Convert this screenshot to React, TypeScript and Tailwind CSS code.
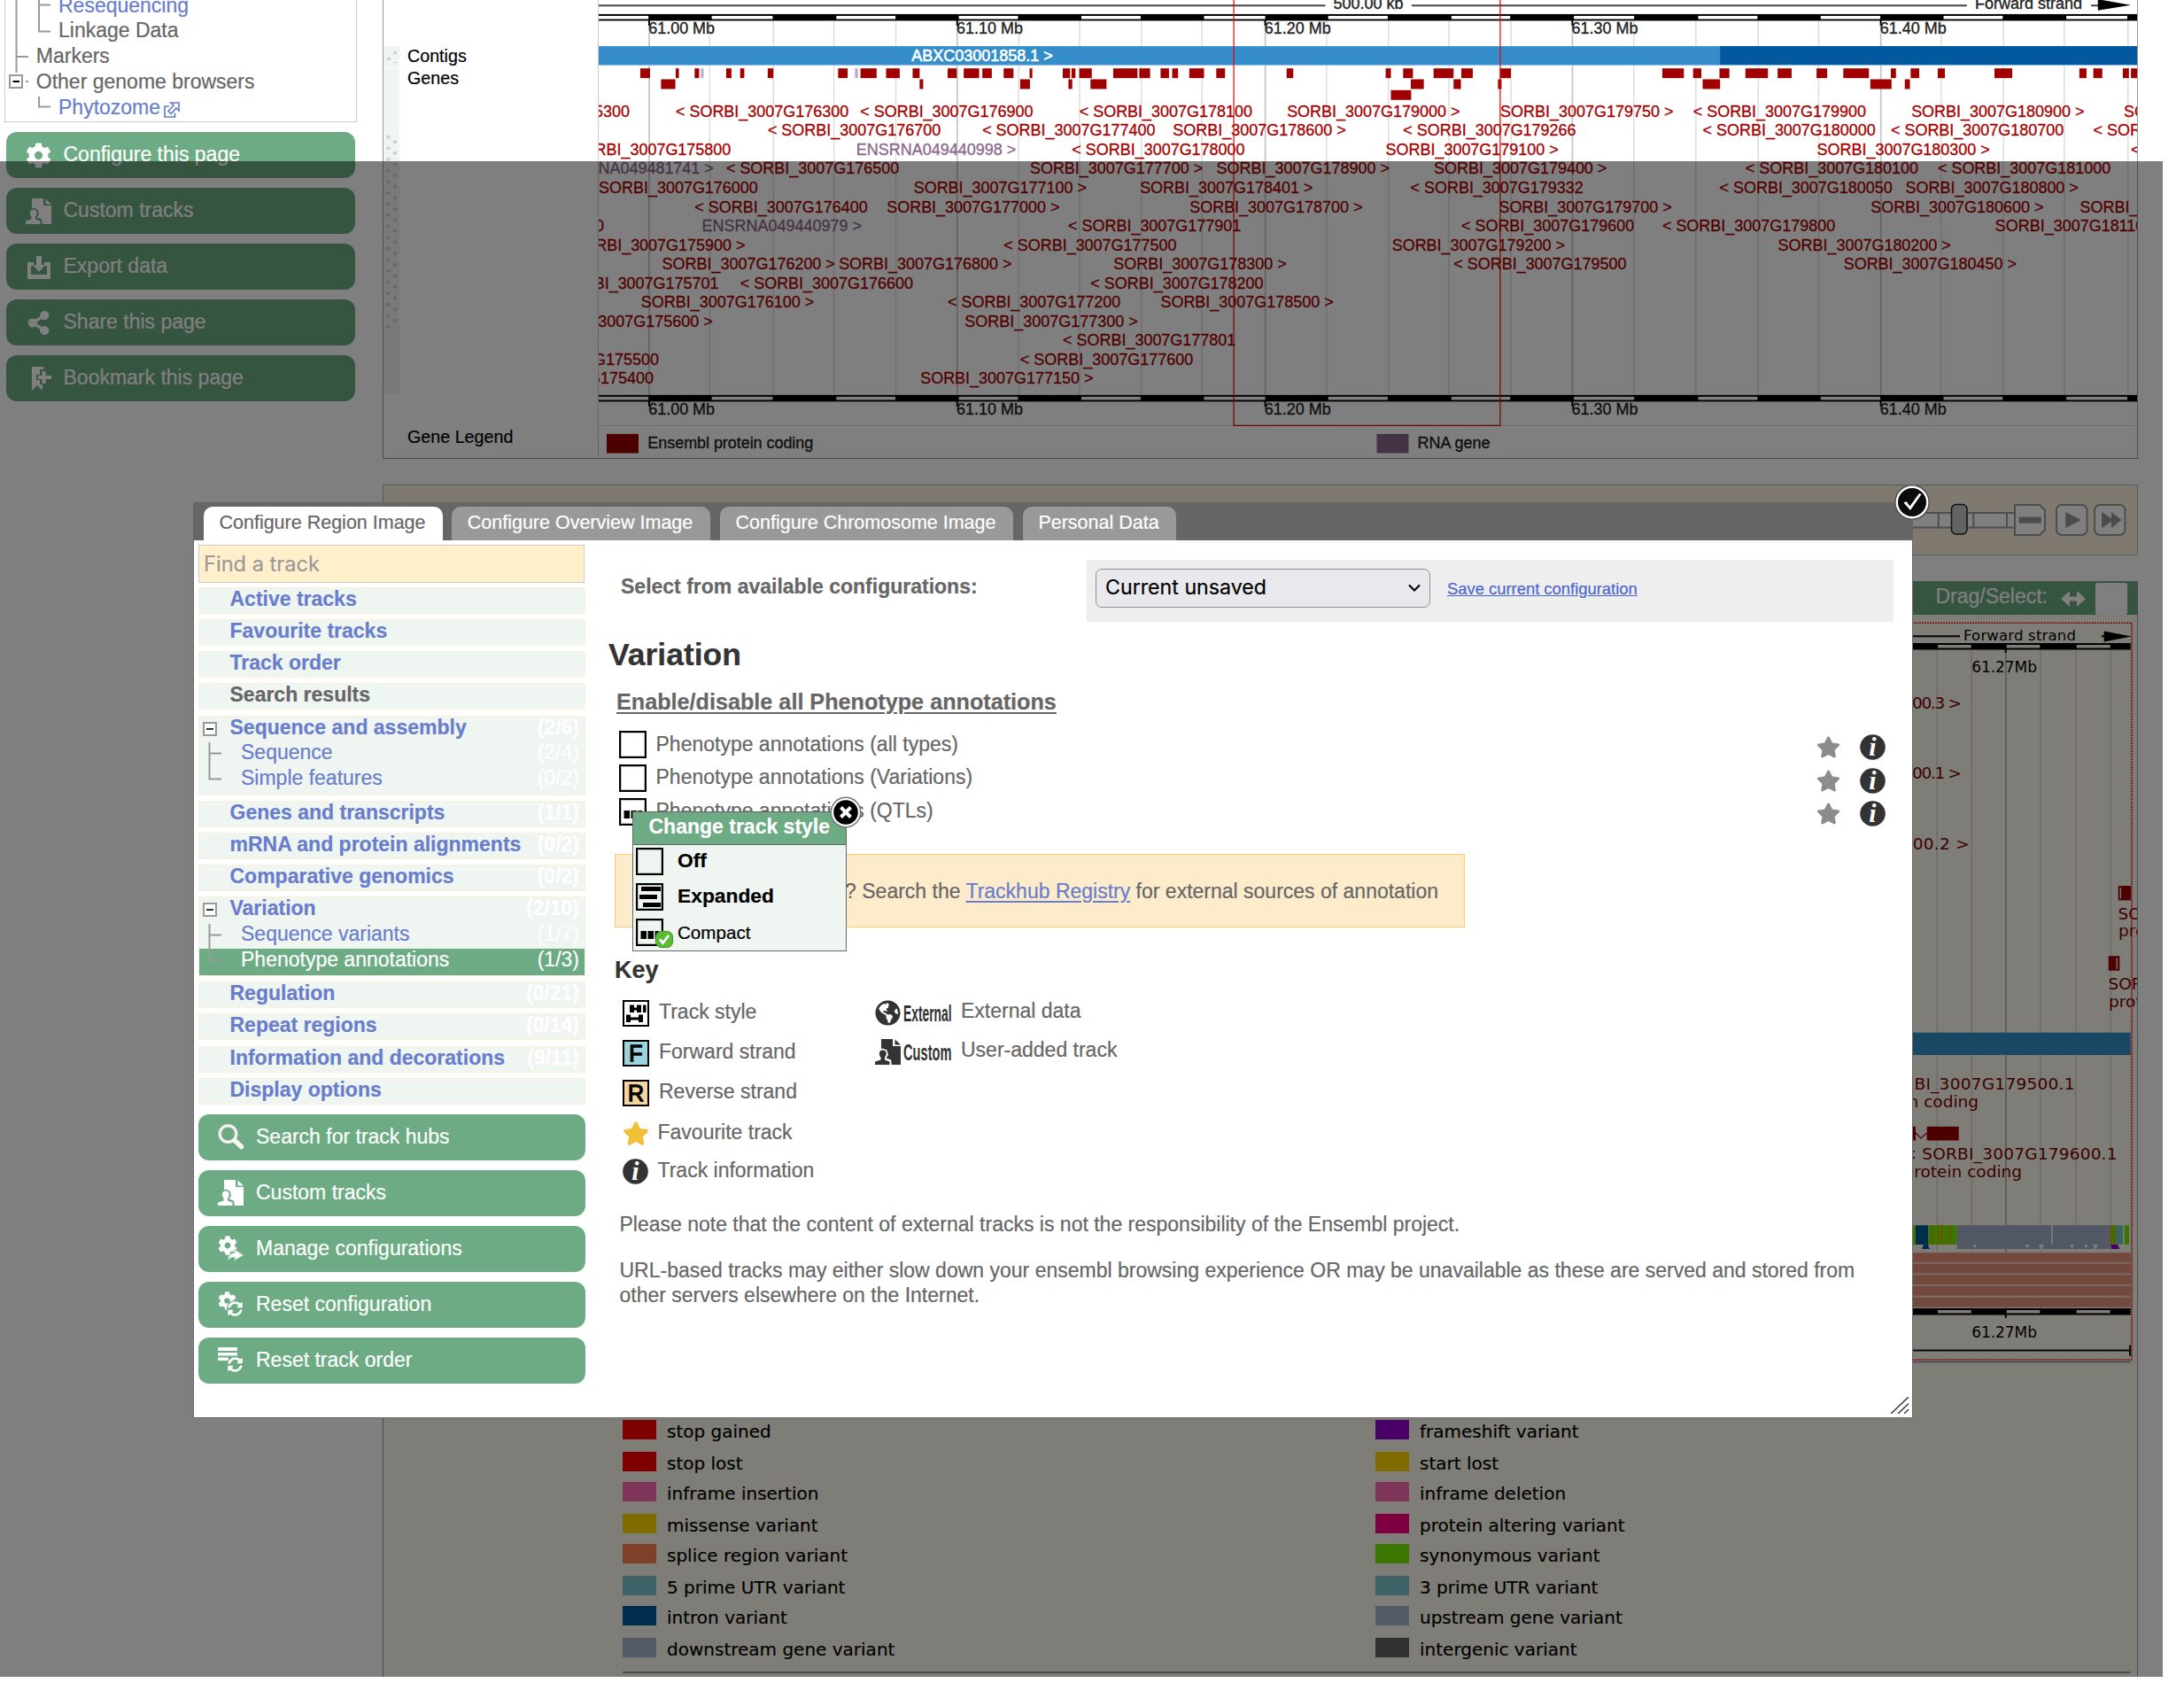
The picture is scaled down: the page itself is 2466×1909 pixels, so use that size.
import type { ReactNode } from "react";
import { FaCog, FaGlobeAmericas, FaShareAlt, FaStar, FaSyncAlt } from "react-icons/fa";

/* ---------- small icons ---------- */

const DocUser = ({ color = "#fff", gap = "#6cab83" }: { color?: string; gap?: string }) => (
  <svg viewBox="0 0 29 29" className="h-[29px] w-[29px] shrink-0">
    <path d="M7 0H20V8H29V29H7Z" fill={color} />
    <path d="M22.5 0.5L29 6.5H22.5Z" fill={color} />
    <path d="M-1 30V23.5L5 21.5L3.5 18.5V13L8.5 10.5L13.5 12.5L15 18L12.5 21.5L18 23.5L19 30Z" fill={gap} />
    <path d="M0 29V25.5L6.5 23.5V20.5Q4.8 19 4.8 16.5Q5 12.4 8.7 12.4Q12.6 12.4 12.8 16.5Q12.6 19 11 20.5V23.5L16.5 25.5V29Z" fill={color} />
  </svg>
);

const ExportIcon = () => (
  <svg viewBox="0 0 29 29" className="h-[29px] w-[29px] shrink-0" fill="#fff">
    <path d="M2 9H9V13H6V23H24V13H21V9H28V28H2Z" />
    <path d="M12 2H18V12H22L15 20L8 12H12Z" />
  </svg>
);

const BookmarkIcon = () => (
  <svg viewBox="0 0 29 29" className="h-[29px] w-[29px] shrink-0" fill="#fff">
    <path d="M7 1H20V4H16V10H12V16H16V21H19V28L13 22L7 28Z" />
    <path d="M18.5 6H22.5V11H29V15H22.5V20H18.5V15H14V11H18.5Z" />
  </svg>
);

const Magnifier = () => (
  <svg viewBox="0 0 29 29" className="h-[29px] w-[29px] shrink-0" fill="none">
    <circle cx="11.5" cy="11" r="9.3" stroke="#c9c9c9" strokeWidth="4" />
    <circle cx="11.5" cy="11" r="9.3" stroke="#f6f6f6" strokeWidth="2.4" />
    <path d="M19 18.5L26.5 25.5" stroke="#f6f6f6" strokeWidth="5.5" strokeLinecap="round" />
  </svg>
);

const ManageIcon = () => (
  <span className="relative h-[29px] w-[29px] shrink-0 text-white">
    <FaCog className="absolute left-0 top-0 h-[22px] w-[22px]" />
    <svg viewBox="0 0 29 29" className="absolute inset-0">
      <path d="M11 28Q11.5 20 19 19V15.5L29 22L19 28V24.5Q14 24 11 28Z" fill="#fff" stroke="#8fbfa0" strokeWidth="1" />
    </svg>
  </span>
);

const ResetConfigIcon = () => (
  <span className="relative h-[29px] w-[29px] shrink-0 text-white">
    <FaCog className="absolute left-0 top-0 h-[21px] w-[21px]" />
    <span className="absolute bottom-0 right-0 h-[19px] w-[19px] rounded-full bg-[#6cab83] p-[1px]">
      <FaSyncAlt className="h-[17px] w-[17px]" />
    </span>
  </span>
);

const ResetOrderIcon = () => (
  <span className="relative h-[29px] w-[29px] shrink-0 text-white">
    <svg viewBox="0 0 29 29" className="absolute inset-0" fill="#fff">
      <path d="M0 0H22V4H0ZM0 6H22V9.500H0ZM0 11.500H12V15H0Z" />
    </svg>
    <span className="absolute bottom-0 right-0 h-[19px] w-[19px] rounded-full bg-[#6cab83] p-[1px]">
      <FaSyncAlt className="h-[17px] w-[17px]" />
    </span>
  </span>
);

const InfoIcon = () => (
  <svg viewBox="0 0 29 29" className="h-[29px] w-[29px] shrink-0">
    <circle cx="14.500" cy="14.500" r="14.300" fill="#333" />
    <text x="14.500" y="24" textAnchor="middle" fontFamily="Liberation Serif, serif" fontStyle="italic" fontWeight="700" fontSize="30" fill="#fff">i</text>
  </svg>
);

const Expander = () => (
  <svg viewBox="0 0 16 16" className="h-4 w-4 shrink-0">
    <rect x="1" y="1" width="14" height="14" fill="#fff" stroke="#999" strokeWidth="2" />
    <path d="M4 8H12" stroke="#000" strokeWidth="1.600" />
  </svg>
);

type BoxKind = "off" | "expanded" | "compact";
const TrackBox = ({ kind, fill = "#fff" }: { kind: BoxKind; fill?: string }) => (
  <svg viewBox="0 0 31 31" className="h-[31px] w-[31px] shrink-0">
    <rect x="1" y="1" width="29" height="29" fill={fill} stroke="#000" strokeWidth="2" />
    <rect x="2.500" y="2.500" width="26" height="26" fill="none" stroke="#999" strokeWidth="1" opacity=".6" />
    {kind === "expanded" && <path d="M6 4H28V9H6ZM4 13H24V18H4ZM8 22H28V27H8Z" />}
    {kind === "compact" && <path d="M5.500 14H12V23H5.500ZM13.500 14H20V23H13.500ZM21.500 14H26V23H21.500Z" />}
  </svg>
);

/* ---------- overview chart ---------- */

const whiteSegs: [number, number][] = [
  [675, 731.2], [802.7, 871.5], [943.5, 1010.3], [1081.9, 1148.7], [1220.3, 1287.3], [1358.9, 1428], [1499.2, 1566.4],
  [1638.4, 1704.8], [1776.8, 1844.8], [1917.2, 1984.1], [2055.6, 2122.9], [2194.4, 2261.2], [2333.1, 2401.9],
];
const minorGrid = [800.4, 872.3, 940.7, 1010.7, 1149.5, 1218.3, 1288, 1356.5, 1497.2, 1567.2, 1635.6, 1705.6, 1844.4, 1914.5, 1984.9, 2053.3, 2191.7, 2262, 2330.8, 2402.7];
const majorGrid: [number, string][] = [[732, "61.00 Mb"], [1080, "61.10 Mb"], [1428, "61.20 Mb"], [1775, "61.30 Mb"], [2123.5, "61.40 Mb"]];

const genes: [number, number, number][] = [
  ...([[722, 733], [762, 765.6], [783.4, 788.5], [819, 825], [834.8, 839.5], [866, 872.3], [945.5, 956.2], [970.8, 989], [999.7, 1015.1], [1029.7, 1037.6], [1069.2, 1079.5], [1087.4, 1104.8], [1108.4, 1119.1], [1132.5, 1143.6], [1161.8, 1164.9], [1199.3, 1207.6], [1209.2, 1213.6], [1217.9, 1232.1], [1256.3, 1283.7], [1285.7, 1298], [1309.8, 1319.3], [1322.9, 1329.6], [1342.2, 1358.9], [1372.7, 1382.6], [1452.2, 1459.7], [1564.1, 1570], [1583.8, 1594.9], [1618.2, 1640.8], [1649.5, 1662.5], [1693.4, 1705.6], [1876.6, 1901], [1911.4, 1920.7], [1941.2, 1952.4], [1970.5, 1996], [2006.9, 2022.7], [2050.9, 2062.9], [2081.1, 2110.1], [2134.8, 2140.6], [2157.2, 2166.9], [2187.8, 2195.9], [2251.9, 2272], [2347.8, 2355.9], [2363.6, 2373.7], [2396.9, 2403.8], [2406.1, 2413]] as [number, number][]).map(([a, b]): [number, number, number] => [0, a, b]),
  ...([[745.4, 761.6], [1037.6, 1041.6], [1151.1, 1162.2], [1205.7, 1210], [1230.6, 1248.7], [1592.5, 1607.2], [1640.8, 1649.1], [1691, 1695], [1922.2, 1941.9], [2111.6, 2135.6], [2150.6, 2156.4]] as [number, number][]).map(([a, b]): [number, number, number] => [1, a, b]),
  [2, 1570, 1592.9],
];

const S = "SORBI_3007G";
const labelRows: [number, string][][] = [
  [[530.2, S + "175300"], [762, "< " + S + "176300"], [970.4, "< " + S + "176900"], [1218, "< " + S + "178100"], [1452.6, S + "179000 >"], [1693.7, S + "179750 >"], [1911.4, "< " + S + "179900"], [2158, S + "180900 >"], [2398, S + "181200"]],
  [[866, "< " + S + "176700"], [1108.4, "< " + S + "177400"], [1323.7, S + "178600 >"], [1583.8, "< " + S + "179266"], [1922.2, "< " + S + "180000"], [2134.8, "< " + S + "180700"], [2363.6, "< " + S + "181300"]],
  [[644.5, S + "175800"], [966, "ENSRNA049440998 >"], [1209.6, "< " + S + "178000"], [1564, S + "179100 >"], [2051.3, S + "180300 >"], [2406, "< " + S + "181400"]],
  [[624.5, "ENSRNA049481741 >"], [819, "< " + S + "176500"], [1162.2, S + "177700 >"], [1373, S + "178900 >"], [1618.6, S + "179400 >"], [1970.5, "< " + S + "180100"], [2187.8, "< " + S + "181000"]],
  [[675, S + "176000"], [1030.9, S + "177100 >"], [1286.5, S + "178401 >"], [1592, "< " + S + "179332"], [1941.2, "< " + S + "180050"], [2151.4, S + "180800 >"]],
  [[783.4, "< " + S + "176400"], [1000.4, S + "177000 >"], [1342.6, S + "178700 >"], [1692, S + "179700 >"], [2112, S + "180600 >"], [2348.5, S + "181150"]],
  [[501, S + "175700"], [791.7, "ENSRNA049440979 >"], [1205.3, "< " + S + "177901"], [1649.5, "< " + S + "179600"], [1876.6, "< " + S + "179800"], [2252.7, S + "181100"]],
  [[645.2, S + "175900 >"], [1132.5, "< " + S + "177500"], [1571.2, S + "179200 >"], [2007.3, S + "180200 >"]],
  [[746.6, S + "176200 >"], [946.3, S + "176800 >"], [1256.7, S + "178300 >"], [1640.8, "< " + S + "179500"], [2081.5, S + "180450 >"]],
  [[630.7, S + "175701"], [834.8, "< " + S + "176600"], [1230.6, "< " + S + "178200"]],
  [[722.9, S + "176100 >"], [1069.2, "< " + S + "177200"], [1309.8, S + "178500 >"]],
  [[608.4, S + "175600 >"], [1088.6, S + "177300 >"]],
  [[1199.3, "< " + S + "177801"]],
  [[563, S + "175500"], [1151.1, "< " + S + "177600"]],
  [[557.1, S + "175400"], [1038.4, S + "177150 >"]],
];

const ScaleBar = ({ y, label }: { y: number; label: number }) => (
  <g>
    <rect x="675" y={y} width="1738" height="7.500" fill="#000" />
    {whiteSegs.map(([a, b]) => <rect key={a} x={a} y={y + 2} width={b - a} height="3.600" fill="#fff" />)}
    {majorGrid.map(([x, t]) => (
      <g key={x}>
        <rect x={x - 1} y={y + 7} width="2" height="6" fill="#000" />
        <text x={x - 0.8} y={label} fill="#222" stroke="#222" strokeWidth=".35">{t}</text>
      </g>
    ))}
  </g>
);

const OverviewChart = () => (
  <svg viewBox="675 0 1738 517" className="h-[517px] w-[1738px] shrink-0 border-l border-[#ccc]" fontFamily="Liberation Sans, Arial, sans-serif" fontSize="18">
    {minorGrid.map((x) => <rect key={x} x={x - 0.7} y="23" width="1.500" height="423" fill="#dedede" />)}
    {majorGrid.map(([x]) => <rect key={x} x={x - 0.8} y="23" width="1.700" height="423" fill="#c4c4c4" />)}
    <path d="M675 6H1496M1593.500 6H2220.700M2361 6H2370" stroke="#444" strokeWidth="2" />
    <path d="M2368.700 -1L2406 5.500L2368.700 11.500Z" />
    <text x="1505" y="9.800" fill="#222" stroke="#222" strokeWidth=".35">500.00 kb</text>
    <text x="2230" y="9.800" fill="#222" stroke="#222" strokeWidth=".35" textLength="121">Forward strand</text>
    <ScaleBar y={15.8} label={37.6} />
    <ScaleBar y={446} label={467.8} />
    <rect x="675" y="52" width="1738" height="21.700" fill="#358ec9" />
    <rect x="1942" y="52" width="471" height="21.700" fill="#00599d" />
    <rect x="675" y="72.800" width="1738" height="1" fill="#8fc0e2" />
    <text x="1028.500" y="68.500" fill="#fff" stroke="#fff" strokeWidth=".6">ABXC03001858.1 &gt;</text>
    {genes.map(([r, a, b]) => <rect key={r + "-" + a} x={a} y={77.1 + r * 12.3} width={b - a} height="11" fill="#a00000" />)}
    <rect x="790.500" y="77.100" width="3" height="11" fill="#c1a9c6" />
    <rect x="964.500" y="77.100" width="3.300" height="11" fill="#c1a9c6" />
    <g strokeWidth=".3">
      {labelRows.map((row, i) =>
        row.map(([x, t]) => {
          const color = t.startsWith("ENS") ? "#8b668b" : "#a50000";
          return <text key={x} x={x} y={131.8 + i * 21.55} fill={color} stroke={color}>{t}</text>;
        })
      )}
    </g>
    <rect x="675" y="480" width="1738" height="1" fill="#ddd" />
    <path d="M1392.500 -2V480.500H1693.500V-2" fill="none" stroke="#e80000" strokeWidth="1.200" />
    <rect x="684" y="490" width="36" height="21.700" fill="#9a0000" />
    <g fill="#222" stroke="#222" strokeWidth=".35">
      <text x="730.400" y="506.200" textLength="187">Ensembl protein coding</text>
      <text x="1600" y="506.200" textLength="82">RNA gene</text>
    </g>
    <rect x="1554" y="490" width="36" height="21.700" fill="#8b668b" />
  </svg>
);

/* ---------- detail chart ---------- */

const RegionBar = ({ y, label }: { y: number; label: number }) => (
  <g>
    <rect x="433" y={y} width="1972.700" height="7.500" />
    {[[2188, 2225.7], [2265.7, 2303.3], [2344.7, 2382.7]].map(([a, b]) => <rect key={a} x={a} y={y + 2} width={b - a} height="3.500" fill="#fffaef" />)}
    <rect x="2263.700" y={y + 7} width="2" height="4" />
    <text x="2226.300" y={label} fontSize="17" textLength="73.700">61.27Mb</text>
  </g>
);

const DetailChart = () => (
  <svg viewBox="433 694 1980 894" className="h-[894px] w-[1980px] shrink-0" fontFamily="DejaVu Sans, sans-serif" fontSize="18.500">
    {[2187.3, 2226.3, 2304, 2343.7, 2383.3].map((x) => <rect key={x} x={x - 0.8} y="733" width="1.600" height="744" fill="#dcdad8" />)}
    <rect x="2264" y="733" width="1.700" height="744" fill="#b4b2b0" />
    <path d="M433 718.200H2213M2373 718.200H2380" stroke="#000" strokeWidth="2" />
    <path d="M2375.700 712.500L2406.700 718.500L2375.700 724.600Z" />
    <text x="2217" y="722.500" fontSize="16.500" textLength="127">Forward strand</text>
    <RegionBar y={726} label={758.6} />
    <RegionBar y={1477} label={1509.6} />
    <g fill="#7a0000">
      <text x="2215" y="800" textAnchor="end" textLength="56">00.3 &gt;</text>
      <text x="2215" y="879" textAnchor="end" textLength="56">00.1 &gt;</text>
      <text x="2223.700" y="958.600" textAnchor="end" textLength="64">00.2 &gt;</text>
      <text x="2391.500" y="1037.500">SORBI_3007G</text>
      <text x="2392" y="1056.800">protein coding</text>
      <text x="2380.500" y="1116.800">SORBI_3007G</text>
      <text x="2381" y="1136.800">protein coding</text>
      <text x="2342.500" y="1230" textAnchor="end" textLength="221">SORBI_3007G179500.1</text>
      <text x="2234" y="1249.600" textAnchor="end">protein coding</text>
      <text x="2390.500" y="1309.300" textAnchor="end" textLength="242">&lt; SORBI_3007G179600.1</text>
      <text x="2283" y="1329.300" textAnchor="end">protein coding</text>
    </g>
    <g fill="#9a0000">
      <rect x="2391.700" y="1000" width="14.300" height="16.400" />
      <rect x="2380.700" y="1079.300" width="12.600" height="16.400" />
      <rect x="2150" y="1271.800" width="13" height="15.700" />
      <rect x="2175.700" y="1271.800" width="36" height="15.700" />
    </g>
    <path d="M2163 1279L2169 1285L2175.700 1279" fill="none" stroke="#9a0000" strokeWidth="1.200" />
    <rect x="2393.500" y="1002" width="1.600" height="12.500" fill="#e8d8d0" />
    <rect x="2389.500" y="1081.500" width="1.600" height="12.500" fill="#e8d8d0" />
    <rect x="433" y="1165.700" width="1972.700" height="25.300" fill="#358ec9" />
    <g>
      <rect x="2150" y="1383.200" width="13" height="22" fill="#76ee00" />
      <path d="M2163 1383.200H2177.300V1407L2179 1410H2170L2172 1405H2163Z" fill="#00599d" />
      <rect x="2177.300" y="1383.200" width="32.400" height="21.800" fill="#76ee00" />
      <path d="M2182 1383.200V1405M2188.700 1383.200V1405M2192.500 1383.200V1405M2201.700 1383.200V1405" stroke="#e0a000" strokeWidth="1.600" />
      <rect x="2209.700" y="1383.200" width="173" height="26.800" fill="#a2aec8" />
      <rect x="2316" y="1383.200" width="1.700" height="21.800" fill="#fffaef" />
      <path d="M2228 1405H2231V1408H2228ZM2287 1405H2291V1408H2287ZM2338 1405H2341V1408H2338ZM2354 1405H2357V1408H2354ZM2302 1405H2308L2305.500 1410H2304ZM2363 1405H2369L2367 1410H2365Z" fill="#fffaef" />
      <rect x="2382.700" y="1383.200" width="6.300" height="21.800" fill="#76ee00" />
      <path d="M2383.500 1383.200V1405M2387 1383.200V1405" stroke="#e0a000" strokeWidth="1.400" />
      <rect x="2389" y="1383.200" width="8" height="21.800" fill="#7ac5cd" />
      <rect x="2398.700" y="1383.200" width="5.300" height="21.800" fill="#76ee00" />
      <path d="M2383 1405H2391L2393.500 1410H2384Z" fill="#9400d3" />
    </g>
    <rect x="433" y="1414.300" width="1972.700" height="61.500" fill="#f2cfc0" />
    {[1414.3, 1426.8, 1439.4, 1452, 1465].map((y) => <rect key={y} x="433" y={y} width="1972.700" height="10.500" fill="#e8927a" />)}
    <path d="M433 1524.600H2405M2405 1518.500V1530.700" stroke="#111" strokeWidth="2" />
    <path d="M433 1537.500H2406" stroke="#888" strokeWidth="1.500" />
    <path d="M433 703.300H2407V1535H433" fill="none" stroke="#f01818" strokeWidth="1.600" strokeDasharray="2 1" />
  </svg>
);

const legend: [string, string, string, string][] = [
  ["#ff0000", "stop gained", "#9400d3", "frameshift variant"],
  ["#ff0000", "stop lost", "#ffd700", "start lost"],
  ["#ff69b4", "inframe insertion", "#ff69b4", "inframe deletion"],
  ["#ffd700", "missense variant", "#ff0080", "protein altering variant"],
  ["#ff7f50", "splice region variant", "#76ee00", "synonymous variant"],
  ["#7ac5cd", "5 prime UTR variant", "#7ac5cd", "3 prime UTR variant"],
  ["#00599d", "intron variant", "#a2b5cd", "upstream gene variant"],
  ["#a2b5cd", "downstream gene variant", "#636363", "intergenic variant"],
];

const LegendCell = ({ color, label }: { color: string; label: string }) => (
  <div className="flex items-start gap-[12px]">
    <span className="h-[22px] w-[38px] shrink-0" style={{ backgroundColor: color }} />
    <span className="whitespace-nowrap font-['DejaVu_Sans'] text-[20px] leading-[27px] text-black">{label}</span>
  </div>
);

/* ---------- left navigation ---------- */

const TreeRow = ({ lines, label, link, icon, indent }: { lines: ReactNode; label: string; link?: boolean; icon?: ReactNode; indent: boolean }) => (
  <div className="flex h-[28.8px] items-center">
    <svg viewBox={indent ? "0 0 60 28.8" : "0 0 34.8 28.8"} className={indent ? "h-[28.8px] w-[60px] shrink-0" : "h-[28.8px] w-[34.8px] shrink-0"} stroke="#999" strokeWidth="2" fill="none">
      {lines}
    </svg>
    <span className={link ? "whitespace-nowrap pb-px text-[#687dcc]" : "whitespace-nowrap pb-px text-[#666]"}>{label}</span>
    {icon}
  </div>
);

const SideButton = ({ icon, label, inset }: { icon: ReactNode; label: string; inset?: boolean }) => (
  <div className={`flex h-[52px] items-center rounded-xl bg-[#6cab83] text-[23px] text-white ${inset ? "gap-[14px] pl-[22px]" : "gap-[13.500px] pl-[22px]"}`}>
    {icon}
    <span className="whitespace-nowrap pb-[2px] leading-[30px]">{label}</span>
  </div>
);

const ToolControls = () => (
  <svg viewBox="2140 560 262 54" className="h-[54px] w-[262px]" stroke="#9c9c9c" strokeWidth="2">
    <rect x="2100" y="579" width="180" height="16.500" fill="#fff" />
    <path d="M2188.700 579V595.500M2228.300 579V595.500M2266 579V595.500" />
    <rect x="2203.500" y="569.500" width="17.500" height="33.500" rx="5" fill="#c6c6c6" stroke="#222" strokeWidth="1.500" />
    <path d="M2275 570H2303L2309 576V598L2303 604H2275Z" fill="#fff" />
    <rect x="2279.700" y="583.600" width="25" height="7" fill="#999" stroke="none" />
    {[2322, 2365].map((x) => (
      <rect key={x} x={x} y="570" width="34.500" height="34" rx="6" fill="#fff" />
    ))}
    <path d="M2332.300 578L2349.700 587L2332.300 596ZM2373 578L2384 585V578L2395.500 587L2384 596V589L2373 596Z" fill="#999" stroke="none" />
  </svg>
);

/* ---------- modal ---------- */

type Item = { label: string; count?: string; plain?: boolean; children?: { label: string; count: string; active?: boolean }[] };
const menu: Item[] = [
  { label: "Active tracks" },
  { label: "Favourite tracks" },
  { label: "Track order" },
  { label: "Search results", plain: true },
  { label: "Sequence and assembly", count: "(2/6)", children: [{ label: "Sequence", count: "(2/4)" }, { label: "Simple features", count: "(0/2)" }] },
  { label: "Genes and transcripts", count: "(1/1)" },
  { label: "mRNA and protein alignments", count: "(0/2)" },
  { label: "Comparative genomics", count: "(0/2)" },
  { label: "Variation", count: "(2/10)", children: [{ label: "Sequence variants", count: "(1/7)" }, { label: "Phenotype annotations", count: "(1/3)", active: true }] },
  { label: "Regulation", count: "(0/21)" },
  { label: "Repeat regions", count: "(0/14)" },
  { label: "Information and decorations", count: "(9/11)" },
  { label: "Display options" },
];

const MenuItem = ({ item }: { item: Item }) => (
  <div className={`border border-[#fbf1da] bg-[#eff5f1] ${item.children ? "h-[90px]" : "h-[30px]"}`}>
    <div className={`flex h-[28.5px] items-start pr-[6px] font-bold ${item.children ? "leading-[24px]" : "leading-[25px]"} ${item.plain ? "text-[#666]" : "text-[#687dcc]"}`}>
      <span className="w-[34.500px] shrink-0 pl-1 pt-[6px]">{item.children && <Expander />}</span>
      <span className="flex-1 whitespace-nowrap">{item.label}</span>
      <span className="text-white">{item.count}</span>
    </div>
    {item.children?.map((c, i) => (
      <div key={c.label} className={`flex items-start pr-[6px] leading-[24px] ${c.active ? "h-[30.5px] bg-[#6cab83] text-white" : "h-[29px] text-[#687dcc]"}`}>
        <svg viewBox="0 0 47 29" className="h-[29px] w-[47px] shrink-0" fill="none" stroke="#999" strokeWidth="2">
          <path d={i === 0 ? "M11.500 1V29M11.500 13.500H25" : "M11.500 0V13.500H25"} />
        </svg>
        <span className="flex-1 whitespace-nowrap">{c.label}</span>
        <span className="text-white">{c.count}</span>
      </div>
    ))}
  </div>
);

const TrackRow = ({ kind, label }: { kind: BoxKind; label: string }) => (
  <div className="flex h-[37.8px] items-center pl-[38px] pr-[9px]">
    <TrackBox kind={kind} />
    <span className="flex-1 whitespace-nowrap pb-[2px] pl-[10.500px]">{label}</span>
    <FaStar className="mr-[22px] mt-[5px] h-[27px] w-[27px] text-[#8c8c8c]" />
    <span className="mt-[5px]"><InfoIcon /></span>
  </div>
);

const LetterBox = ({ letter, fill }: { letter: string; fill: string }) => (
  <svg viewBox="0 0 30 30" className="h-[30px] w-[30px] shrink-0">
    <rect x="1" y="1" width="28" height="28" fill={fill} stroke="#000" strokeWidth="2" />
    <text x="15" y="24" textAnchor="middle" fontFamily="Liberation Sans, sans-serif" fontSize="25" fill="#000" stroke="#000" strokeWidth="1.300">{letter}</text>
  </svg>
);

const KeyRow = ({ icon, label, near }: { icon: ReactNode; label: string; near?: boolean }) => (
  <div className="flex h-[45.3px] items-start">
    <span className={near ? "w-[39.500px] shrink-0" : "w-[41px] shrink-0"}>{icon}</span>
    <span className="whitespace-nowrap leading-[27px]">{label}</span>
  </div>
);

const TagLabel = ({ text }: { text: string }) => (
  <svg viewBox="0 0 55 30" className="h-[30px] w-[55px] shrink-0">
    <text x="0" y="24" fontFamily="Liberation Sans, sans-serif" fontWeight="700" fontSize="26" fill="#333" textLength="54.500" lengthAdjust="spacingAndGlyphs">{text}</text>
  </svg>
);

const StylePopup = () => (
  <div className="absolute left-[714px] top-[916px] h-[158px] w-[242px] border border-[#666] bg-[#eff5f1] text-black">
    <div className="h-[37px] border-b border-[#666] bg-[#6cab83] pl-[17.500px] text-[23px] font-bold leading-[32px] text-white">Change track style</div>
    {([["off", "Off"], ["expanded", "Expanded"], ["compact", "Compact"]] as [BoxKind, string][]).map(([kind, label]) => (
      <div key={kind} className="flex h-[40px] items-start pl-[3px] pt-[3px]">
        <span className="relative">
          <TrackBox kind={kind} fill="#eff5f1" />
          {kind === "compact" && (
            <svg viewBox="0 0 20 19" className="absolute left-[22px] top-[14px] h-[19px] w-[20px]">
              <rect x=".5" y=".5" width="19" height="18" rx="6" fill="#5cba35" stroke="#3f9420" />
              <path d="M5 9.500L8.500 13.500L15 5" stroke="#fff" strokeWidth="2.800" fill="none" />
            </svg>
          )}
        </span>
        <span className={`pl-[16px] ${kind === "compact" ? "text-[20.6px] leading-[31px]" : "text-[22.800px] font-bold leading-[28px]"}`}>{label}</span>
      </div>
    ))}
    <svg viewBox="0 0 36 36" className="absolute right-[-18px] top-[-18px] h-[36px] w-[36px]">
      <circle cx="18" cy="18" r="17.500" fill="#777" />
      <circle cx="18" cy="18" r="16" fill="#fff" />
      <circle cx="18" cy="18" r="13.800" fill="#000" />
      <path d="M12.500 12.500L23.500 23.500M23.500 12.500L12.500 23.500" stroke="#fff" strokeWidth="4" />
    </svg>
  </div>
);

const Modal = () => (
  <div className="absolute left-[218px] top-[567px] flex h-[1034px] w-[1942px] flex-col border border-[#666] bg-white text-[23px] text-[#666]">
    <div className="flex h-[42px] shrink-0 items-end gap-[11px] bg-[#666] pl-[11px] text-[21.5px] leading-[37px]">
      <div className="h-[38px] w-[270px] whitespace-nowrap rounded-t-[10px] bg-white pr-[2px] text-center">Configure Region Image</div>
      <div className="h-[38px] w-[292px] whitespace-nowrap rounded-t-[10px] bg-[#999] pr-[2px] text-center text-white -ml-px">Configure Overview Image</div>
      <div className="h-[38px] w-[331px] whitespace-nowrap rounded-t-[10px] bg-[#999] pr-[2px] text-center text-white">Configure Chromosome Image</div>
      <div className="h-[38px] w-[173px] whitespace-nowrap rounded-t-[10px] bg-[#999] pr-[2px] text-center text-white">Personal Data</div>
    </div>
    <div className="flex flex-1">
      <aside className="w-[442px] shrink-0 pl-[5px] pt-[5px]">
        <div className="mb-[5px] h-[43px] w-[436px] border border-[#ccc] bg-[#fff0cb] pl-[5px] font-['Inter'] text-[23.6px] leading-[41px] text-[#999]">Find a track</div>
        <div className="flex w-[437px] flex-col gap-[6.150px] text-[23px]">
          {menu.map((m) => <MenuItem key={m.label} item={m} />)}
        </div>
        <div className="mt-[11px] flex w-[437px] flex-col gap-[11px]">
          <SideButton inset icon={<Magnifier />} label="Search for track hubs" />
          <SideButton inset icon={<DocUser />} label="Custom tracks" />
          <SideButton inset icon={<ManageIcon />} label="Manage configurations" />
          <SideButton inset icon={<ResetConfigIcon />} label="Reset configuration" />
          <SideButton inset icon={<ResetOrderIcon />} label="Reset track order" />
        </div>
      </aside>
      <main className="w-[1477px] pt-[22px]">
        <div className="flex h-[70px] justify-between pl-[40px]">
          <span className="whitespace-nowrap font-bold leading-[60px]">Select from available configurations:</span>
          <div className="flex w-[911px] items-start bg-[#eee] pl-[10px] pt-[10px]">
            <div className="flex h-[44px] w-[378px] items-center justify-between rounded-[7px] border border-[#8f8f9d] bg-[#e9e9ed] pl-[10px] pr-[9px] font-['Inter'] text-[23.2px] text-black">
              <span className="pb-[2px]">Current unsaved</span>
              <svg viewBox="0 0 16 10" className="h-[10px] w-[16px]" fill="none" stroke="#000" strokeWidth="2.200"><path d="M2 1.500L8 7.500L14 1.500" /></svg>
            </div>
            <a className="whitespace-nowrap pl-[19px] text-[18.4px] leading-[45px] text-[#4c66d0] underline">Save current configuration</a>
          </div>
        </div>
        <h1 className="mt-[17px] pl-[26px] text-[35.5px] font-bold leading-[40px] text-[#333]">Variation</h1>
        <h2 className="mt-[18px] pl-[35px] text-[25.2px] font-bold leading-[30px] underline decoration-[1.5px] underline-offset-[3px]">Enable/disable all Phenotype annotations</h2>
        <div className="mt-[15px]">
          <TrackRow kind="off" label="Phenotype annotations (all types)" />
          <TrackRow kind="off" label="Phenotype annotations (Variations)" />
          <TrackRow kind="compact" label="Phenotype annotations (QTLs)" />
        </div>
        <div className="ml-[33px] mt-[29px] flex h-[83px] w-[960px] items-center justify-end border border-[#ffcc66] bg-[#fdeccb] pr-[29px]">
          <span className="whitespace-nowrap">Looking for more data? Search the <a className="text-[#687dcc] underline underline-offset-[3px]">Trackhub Registry</a> for external sources of annotation</span>
        </div>
        <h2 className="mt-[32px] pl-[33px] text-[27px] font-bold leading-[32px] text-[#333]">Key</h2>
        <div className="mt-[17.500px] flex h-[239px] pl-[42px]">
          <div className="w-[285px]">
            <KeyRow
              icon={
                <svg viewBox="0 0 30 30" className="h-[30px] w-[30px]">
                  <rect x="1" y="1" width="28" height="28" fill="#fff" stroke="#000" strokeWidth="2" />
                  <path d="M8 5.500H13V8.500H16V5.500H21V14H16V11.500H13V14H8ZM23 5.500H26.500V14H23ZM4 16.500H9V19.500H18V16.500H23V25H18V22.500H9V25H4Z" />
                </svg>
              }
              label="Track style"
            />
            <KeyRow icon={<LetterBox letter="F" fill="#9ad4de" />} label="Forward strand" />
            <KeyRow icon={<LetterBox letter="R" fill="#f5d59c" />} label="Reverse strand" />
            <KeyRow near icon={<FaStar className="h-[29px] w-[30px] text-[#f0c137]" />} label="Favourite track" />
            <div className="-mt-[2px]">
              <KeyRow near icon={<InfoIcon />} label="Track information" />
            </div>
          </div>
          <div>
            <div className="flex h-[44px] items-start">
              <FaGlobeAmericas className="mr-[3px] h-[29px] w-[29px] text-[#333]" />
              <TagLabel text="External" />
              <span className="pl-[10px] leading-[25px]">External data</span>
            </div>
            <div className="flex h-[44px] items-start">
              <span className="mr-[3px]"><DocUser color="#333" gap="#fff" /></span>
              <TagLabel text="Custom" />
              <span className="pl-[10px] leading-[25px]">User-added track</span>
            </div>
          </div>
        </div>
        <p className="pl-[38.500px] leading-[28px]">Please note that the content of external tracks is not the responsibility of the Ensembl project.</p>
        <p className="mt-[24px] w-[1470px] whitespace-nowrap pl-[38.500px] leading-[28px]">
          URL-based tracks may either slow down your ensembl browsing experience OR may be unavailable as these are served and stored from
          <br />
          other servers elsewhere on the Internet.
        </p>
      </main>
    </div>
    <svg viewBox="0 0 40 40" className="absolute right-[-20px] top-[-21px] h-[40px] w-[40px]">
      <circle cx="20" cy="20" r="20" fill="#555" />
      <circle cx="20" cy="20" r="18.400" fill="#fff" />
      <circle cx="20" cy="20" r="16" fill="#0c0c0c" />
      <path d="M10.500 20.500L13.500 19L17.500 24.500L28 10L30.500 11L18 29Z" fill="#fff" />
    </svg>
    <svg viewBox="0 0 20 19" className="absolute bottom-[4px] right-[4px] h-[19px] w-[20px]" stroke="#333" strokeWidth="1.400">
      <path d="M0 19L20 0M8 19L20 7.500M15 19L20 14" />
    </svg>
  </div>
);

/* ---------- page ---------- */

const handleDots = Array.from({ length: 18 }, (_, i) => i);

export default function App() {
  return (
    <div className="relative h-[1909px] w-[2466px] overflow-hidden bg-white font-['Liberation_Sans',Arial,sans-serif] [-webkit-text-stroke:0.2px]">
      <div className="flex h-[1893px] overflow-hidden">
        <nav className="w-[432px] shrink-0 pl-[5px] text-[23px]">
          <div className="-mt-[9px] h-[147px] w-[398px] border border-[#ccc]">
            <TreeRow indent link label="Resequencing" lines={<path d="M12.500 0V29M38 0V29M38 13.500H51" />} />
            <TreeRow indent label="Linkage Data" lines={<path d="M12.500 0V29M38 0V14.500H51" />} />
            <TreeRow indent={false} label="Markers" lines={<path d="M12.500 0V29M12.500 14H26" />} />
            <TreeRow indent={false} label="Other genome browsers" lines={<><path d="M12.500 0V4" /><rect x="5" y="7" width="14" height="14" /><path d="M8.500 14H16" stroke="#000" /><path d="M23 14H26" /></>} />
            <TreeRow
              indent
              link
              label="Phytozome"
              lines={<path d="M38 2V13.500H51" />}
              icon={
                <svg viewBox="0 0 18 18" className="ml-1 mt-1 h-[18px] w-[18px]" fill="none" stroke="#687dcc" strokeWidth="1.700">
                  <path d="M6 5H1V17H12.500V12.500" />
                  <path d="M8 1H17V10L14 7L8 13.500L5 10.500L11 4Z" />
                </svg>
              }
            />
          </div>
          <div className="ml-[2px] mt-[11px] flex w-[394px] flex-col gap-[11px]">
            <SideButton icon={<FaCog className="h-[29px] w-[29px] shrink-0" />} label="Configure this page" />
            <SideButton icon={<DocUser />} label="Custom tracks" />
            <SideButton icon={<ExportIcon />} label="Export data" />
            <SideButton icon={<FaShareAlt className="h-[27px] w-[29px] shrink-0" />} label="Share this page" />
            <SideButton icon={<BookmarkIcon />} label="Bookmark this page" />
          </div>
        </nav>

        <div className="w-[1982px] shrink-0">
          <section className="flex h-[518px] overflow-hidden border-x border-b border-[#999]">
            <div className="w-[18px] shrink-0 pt-[52px]">
              <svg viewBox="0 0 18 24" className="h-[24px] w-[18px] bg-[#eff5f1]" fill="#cbd3ce">
                <path d="M11 6H15V9H11ZM4 13H8V16H4ZM11 18H15V19H11Z" />
              </svg>
              <svg viewBox="0 0 18 368" className="mt-px h-[368px] w-[18px] bg-[#eff5f1]" fill="#cbd3ce">
                {handleDots.map((i) => (
                  <g key={i}>
                    <rect x="3.500" y={76 + i * 12.6} width="4" height="3.500" />
                    {i < 17 && <rect x="11" y={81.5 + i * 12.6} width="4" height="3.500" />}
                  </g>
                ))}
              </svg>
            </div>
            <div className="flex w-[224px] shrink-0 flex-col pl-[9px] text-[19.7px] leading-[25px] text-black">
              <span className="mt-[51px]">Contigs</span>
              <span>Genes</span>
              <span className="mt-[380px]">Gene Legend</span>
            </div>
            <OverviewChart />
          </section>

          <section className="mt-[29px] flex h-[80px] items-center justify-end border border-[#9bc3a8] bg-[#fff2e0] pr-[11px]">
            <ToolControls />
          </section>

          <section className="mt-[29px] h-[1300px] border border-[#999] bg-[#fffaef]">
            <div className="flex h-[37px] items-center justify-end bg-[#6cab83] pr-[11px] text-[23px] text-white">
              <span className="pb-[4px]">Drag/Select:</span>
              <svg viewBox="0 0 28 18" className="ml-[15px] mr-[11px] h-[18px] w-[28px]" fill="#fff">
                <path d="M0 9L10 0V6.500H18V0L28 9L18 18V11.500H10V18Z" />
              </svg>
              <span className="h-[36px] w-[36px] rounded-[3px] bg-white" />
            </div>
            <DetailChart />
            <div className="ml-[270px] mt-[15px] grid grid-cols-[850px_1fr] grid-rows-[36px_34px_36px_34px_36px_34px_36px_25px]">
              {legend.flatMap(([c1, l1, c2, l2]) => [
                <LegendCell key={l1} color={c1} label={l1} />,
                <LegendCell key={l2} color={c2} label={l2} />,
              ])}
            </div>
            <div className="ml-[270px] mt-[13px] h-[2px] w-[1702px] bg-[#999]" />
          </section>
        </div>
      </div>

      <div className="absolute left-0 top-[182px] h-[1711px] w-[2442px] bg-black/50" />
      <Modal />
      <StylePopup />
    </div>
  );
}
